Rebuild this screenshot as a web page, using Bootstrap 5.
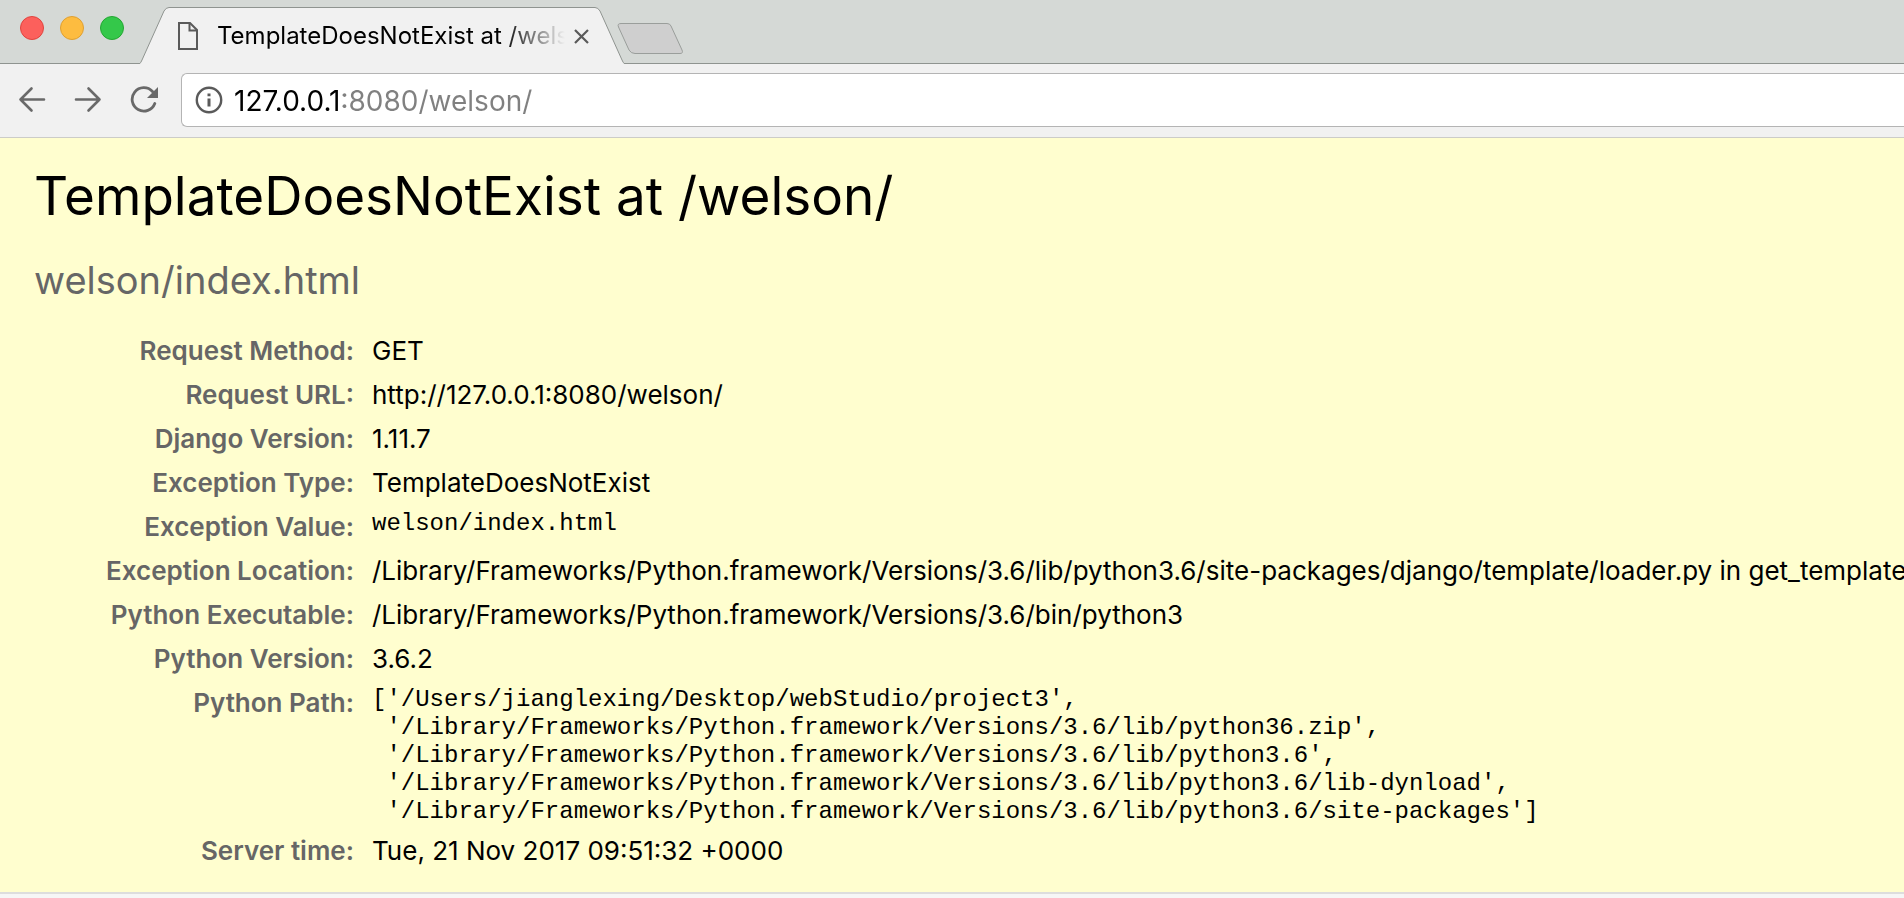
<!DOCTYPE html>
<html lang="en">
<head>
<meta charset="utf-8">
<meta name="viewport" content="width=device-width, initial-scale=1">
<title>TemplateDoesNotExist at /welson/</title>
<link href="https://cdn.jsdelivr.net/npm/bootstrap@5.3.0/dist/css/bootstrap.min.css" rel="stylesheet">
<style>
  body { font-family: Inter, "Liberation Sans", sans-serif; background: #f6f6f6; color: #000; overflow-x: hidden; }
  button { border: 0; background: none; padding: 0; display: flex; color: #696969; }
  svg { display: block; }

  .tabstrip { height: 64px; padding-left: 20px; background: #d5d9d6; border-bottom: 1px solid #8f9490; }
  .lights { gap: 16px; padding-top: 16px; }
  .lights button { width: 24px; height: 24px; border-radius: 50%; border: 1px solid; }
  .light-close { background: #fc605c; border-color: #e0443e !important; }
  .light-min { background: #fdbc40; border-color: #dfa032 !important; }
  .light-max { background: #34c84a; border-color: #24a732 !important; }

  .browser-tab { width: 486px; height: 64px; margin-left: 15px; padding: 0 36px 0 39px; }
  .tab-shape { left: 0; top: 0; }
  .tab-row { height: 58px; margin-top: 7px; }
  .tab-title { margin-left: 19px; font-size: 24px; line-height: 58px; white-space: nowrap; overflow: hidden;
    -webkit-mask-image: linear-gradient(to right, #000 calc(100% - 64px), transparent);
    mask-image: linear-gradient(to right, #000 calc(100% - 64px), transparent); }
  .tab-close { margin-left: 9px; }
  .new-tab { margin-top: 22px; margin-left: -8px; z-index: 1; }

  .toolbar { background: #f1f1f1; padding: 9px 0 10px 18px; border-bottom: 1px solid #ccccc8; }
  .tools { gap: 28px; width: 163px; }
  .omnibox { height: 54px; background: #fff; border: 1px solid #b4b4b4; border-right: 0; border-radius: 6px 0 0 6px; padding-left: 13px; }
  .omnibox input { border: 0; outline: 0; padding: 2px 0 0; margin-left: 11px; font-size: 28px; line-height: 50px; caret-color: #000;
    color: transparent; background: linear-gradient(to right, #000 109px, #808080 109px); -webkit-background-clip: text; background-clip: text; }

  .summary { background: #fffecf; padding: 26px 0 19px 34px; border-bottom: 2px solid #ddd; overflow: hidden; }
  .summary h1 { font-size: 53px; line-height: 64px; font-weight: 400; margin: 0 0 29px; }
  .summary h2 { font-size: 38px; line-height: 46px; font-weight: 400; color: #666; margin: 0 0 26px; }
  .meta { font-size: 26px; line-height: 36px; }
  .meta th { width: 332px; min-width: 332px; padding: 4px 12px 4px 0; font-weight: 600; color: #666; text-align: right; vertical-align: top; }
  .meta td { padding: 4px 6px; vertical-align: top; white-space: nowrap; }
  .meta td.mono-cell { padding: 5px 6px 3px; }
  .meta pre { margin: 0; font: 24px/28px "Liberation Mono", monospace; overflow: visible; }
</style>
</head>
<body>
<header>
  <div class="tabstrip d-flex align-items-start">
    <div class="lights d-flex">
      <button type="button" class="light-close" aria-label="Close window"></button>
      <button type="button" class="light-min" aria-label="Minimize window"></button>
      <button type="button" class="light-max" aria-label="Zoom window"></button>
    </div>
    <div class="browser-tab position-relative">
      <svg class="tab-shape position-absolute" width="486" height="64" aria-hidden="true">
        <path d="M0 64 Q2 63 3 60 L25 11 Q27 7.500 30 7.500 H456 Q459 7.500 461 11 L483 60 Q484 63 486 64" fill="#f1f1f1" stroke="#8f9490"/>
      </svg>
      <div class="tab-row d-flex align-items-center position-relative">
        <svg class="flex-shrink-0" width="20" height="28" viewBox="0 0 20 28" fill="none" stroke="#5a5a5a" stroke-width="2" aria-hidden="true">
          <path d="M1 1H12L19 8V27H1Z"/><path d="M11.500 1V8.500H19"/>
        </svg>
        <div class="tab-title flex-grow-1">TemplateDoesNotExist at /welson/</div>
        <button type="button" class="tab-close" aria-label="Close tab">
          <svg width="15" height="15" viewBox="0 0 15 15" stroke="#5a5a5a" stroke-width="2.200"><path d="M1 1L14 14M14 1L1 14"/></svg>
        </button>
      </div>
    </div>
    <button type="button" class="new-tab" aria-label="New tab">
      <svg width="67" height="33" viewBox="0 0 67 33"><path d="M4 1.500H50Q53 1.500 54 4L65 28Q66.500 31.500 63 31.500H18Q14 31.500 12 28L1.500 5Q0 1.500 4 1.500Z" fill="#cfcfcf" stroke="#9a9e9b"/></svg>
    </button>
  </div>

  <div class="toolbar d-flex align-items-center">
    <div class="tools d-flex flex-shrink-0">
      <button type="button" aria-label="Back">
        <svg width="28" height="28" viewBox="0 0 28 28" fill="none" stroke="currentColor" stroke-width="2.600" stroke-linecap="round" stroke-linejoin="round"><path d="M26 13.500H2.500M13.500 2.500L2.500 13.500L13.500 24.500"/></svg>
      </button>
      <button type="button" aria-label="Forward">
        <svg width="28" height="28" viewBox="0 0 28 28" fill="none" stroke="currentColor" stroke-width="2.600" stroke-linecap="round" stroke-linejoin="round"><path d="M2 13.500H25.500M14.500 2.500L25.500 13.500L14.500 24.500"/></svg>
      </button>
      <button type="button" aria-label="Reload">
        <svg width="28" height="28" viewBox="0 0 28 28"><path d="M22.500 5.500A11.700 11.700 0 1 0 24.800 17.500" fill="none" stroke="currentColor" stroke-width="2.800" stroke-linecap="round"/><path d="M28 1V12H17Z" fill="currentColor"/></svg>
      </button>
    </div>
    <div class="omnibox d-flex align-items-center flex-grow-1">
      <svg class="flex-shrink-0" width="28" height="28" viewBox="0 0 28 28" aria-hidden="true"><circle cx="14" cy="14" r="12.200" fill="none" stroke="#5a5a5a" stroke-width="2.400"/><path d="M12.500 7.500H15.500V10.300H12.500ZM12.500 12.500H15.500V20.500H12.500Z" fill="#5a5a5a"/></svg>
      <input class="flex-grow-1" type="text" aria-label="Address" value="127.0.0.1:8080/welson/" spellcheck="false">
    </div>
  </div>
</header>

<main class="summary">
  <h1>TemplateDoesNotExist at /welson/</h1>
  <h2>welson/index.html</h2>
  <table class="meta">
    <tbody>
      <tr><th scope="row">Request Method:</th><td>GET</td></tr>
      <tr><th scope="row">Request URL:</th><td>http://127.0.0.1:8080/welson/</td></tr>
      <tr><th scope="row">Django Version:</th><td>1.11.7</td></tr>
      <tr><th scope="row">Exception Type:</th><td>TemplateDoesNotExist</td></tr>
      <tr><th scope="row">Exception Value:</th><td class="mono-cell"><pre>welson/index.html</pre></td></tr>
      <tr><th scope="row">Exception Location:</th><td>/Library/Frameworks/Python.framework/Versions/3.6/lib/python3.6/site-packages/django/template/loader.py in get_template</td></tr>
      <tr><th scope="row">Python Executable:</th><td>/Library/Frameworks/Python.framework/Versions/3.6/bin/python3</td></tr>
      <tr><th scope="row">Python Version:</th><td>3.6.2</td></tr>
      <tr><th scope="row">Python Path:</th><td class="mono-cell"><pre>['/Users/jianglexing/Desktop/webStudio/project3',
 '/Library/Frameworks/Python.framework/Versions/3.6/lib/python36.zip',
 '/Library/Frameworks/Python.framework/Versions/3.6/lib/python3.6',
 '/Library/Frameworks/Python.framework/Versions/3.6/lib/python3.6/lib-dynload',
 '/Library/Frameworks/Python.framework/Versions/3.6/lib/python3.6/site-packages']</pre></td></tr>
      <tr><th scope="row">Server time:</th><td>Tue, 21 Nov 2017 09:51:32 +0000</td></tr>
    </tbody>
  </table>
</main>
<script src="https://cdn.jsdelivr.net/npm/bootstrap@5.3.0/dist/js/bootstrap.bundle.min.js"></script>
</body>
</html>
